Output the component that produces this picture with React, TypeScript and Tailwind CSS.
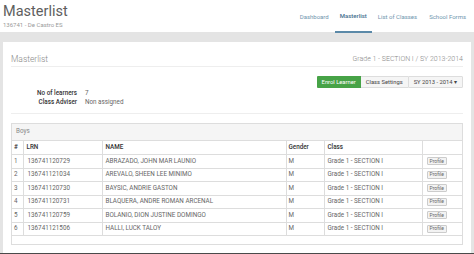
const nav = ["Dashboard", "Masterlist", "List of Classes", "School Forms"];

const boys = [
  { lrn: "136741120729", name: "ABRAZADO, JOHN MAR LAUNIO" },
  { lrn: "136741121034", name: "AREVALO, SHEEN LEE MINIMO" },
  { lrn: "136741120730", name: "BAYSIC, ANDRIE GASTON" },
  { lrn: "136741120731", name: "BLAQUERA, ANDRE ROMAN ARCENAL" },
  { lrn: "136741120759", name: "BOLANIO, DION JUSTINE DOMINGO" },
  { lrn: "136741121506", name: "HALLI, LUCK TALOY" },
];

export default function App() {
  return (
    <div className="w-[474px] h-[254px] overflow-hidden bg-white font-['Roboto',sans-serif]">
      {/* top header */}
      <header className="flex h-[32px] items-start justify-between">
        <div className="pl-[3px] pt-[2px]">
          <h1 className="text-[14.5px] leading-[19px] font-normal text-[#5e5e5e]">Masterlist</h1>
          <p className="text-[6px] leading-[7px] text-[#9a9a9a]">136741 - De Castro ES</p>
        </div>
        <nav className="flex pr-[2px]">
          {nav.map((item) => (
            <a
              key={item}
              className={
                item === "Masterlist"
                  ? "flex h-[33px] items-center border-b-2 border-[#5b89a8] px-[5px] text-[6px] font-medium text-[#3f6e8e]"
                  : "flex h-[33px] items-center px-[6px] text-[6px] text-[#7096ae]"
              }
            >
              {item}
            </a>
          ))}
        </nav>
      </header>

      <div className="h-[10px] bg-[#e4e4e4]" />

      <main className="bg-[#e4e4e4] px-[3px]">
        <section className="bg-white px-[8px] pb-[8px]">
          <div className="flex h-[25px] items-end justify-between border-b border-[#eee] pb-[2px]">
            <h2 className="text-[8.5px] leading-[10px] font-light text-[#888]">Masterlist</h2>
            <span className="text-[7px] leading-[10px] font-light text-[#888]">
              Grade 1 - SECTION I / SY 2013-2014
            </span>
          </div>

          <div className="mt-[9px] flex justify-end">
            <button className="h-[12px] rounded-l-[1px] bg-[#47a347] px-[5px] text-[5.8px] text-white">
              Enrol Learner
            </button>
            <button className="h-[12px] border-y border-[#ddd] bg-[#f5f5f5] px-[5px] text-[5.8px] text-[#444]">
              Class Settings
            </button>
            <button className="h-[12px] rounded-r-[1px] border border-[#ddd] bg-[#f5f5f5] px-[5px] text-[5.8px] text-[#444]">
              SY 2013 - 2014 ▾
            </button>
          </div>

          <dl className="mt-[1px] grid grid-cols-[66px_auto] gap-x-[8px] border-b border-[#eee] pb-[6px] text-[6.3px] leading-[9px]">
            <dt className="text-right font-medium text-[#333]">No of learners</dt>
            <dd className="text-[#666]">7</dd>
            <dt className="text-right font-medium text-[#333]">Class Adviser</dt>
            <dd className="text-[#666]">Non assigned</dd>
          </dl>

          <div className="mt-[9px] border border-[#ddd] pb-[8px]">
            <div className="flex h-[16px] items-center bg-[#f5f5f5] px-[4px] text-[6.3px] text-[#888]">
              Boys
            </div>
            <table className="w-full border-collapse text-[6.3px] text-[#666]">
              <colgroup>
                <col className="w-[11px]" />
                <col className="w-[79px]" />
                <col className="w-[184px]" />
                <col className="w-[38px]" />
                <col className="w-[98px]" />
                <col />
              </colgroup>
              <thead>
                <tr className="h-[14px] border-y border-[#ddd] text-left text-[#333]">
                  <th className="pl-[2px] font-medium">#</th>
                  <th className="border-l border-[#ddd] pl-[3px] font-medium">LRN</th>
                  <th className="border-l border-[#ddd] pl-[3px] font-medium">NAME</th>
                  <th className="border-l border-[#ddd] pl-[2px] font-medium">Gender</th>
                  <th className="border-l border-[#ddd] pl-[3px] font-medium">Class</th>
                  <th className="border-l border-[#ddd]" />
                </tr>
              </thead>
              <tbody>
                {boys.map((b, i) => (
                  <tr key={b.lrn} className="h-[13.5px] border-b border-[#ddd]">
                    <td className="pl-[2px]">{i + 1}</td>
                    <td className="border-l border-[#ddd] pl-[4px]">{b.lrn}</td>
                    <td className="border-l border-[#ddd] pl-[3px]">{b.name}</td>
                    <td className="border-l border-[#ddd] pl-[2px]">M</td>
                    <td className="border-l border-[#ddd] pl-[3px]">Grade 1 - SECTION I</td>
                    <td className="border-l border-[#ddd] pl-[4px]">
                      <span className="inline-flex h-[8px] items-center rounded-[1px] border border-[#ccc] bg-[#f3f3f3] px-[2px] text-[5px] text-[#666]">
                        Profile
                      </span>
                    </td>
                  </tr>
                ))}
              </tbody>
            </table>
          </div>
        </section>
      </main>

      <div className="h-[4px] bg-[#4a4a4a]" />
    </div>
  );
}
